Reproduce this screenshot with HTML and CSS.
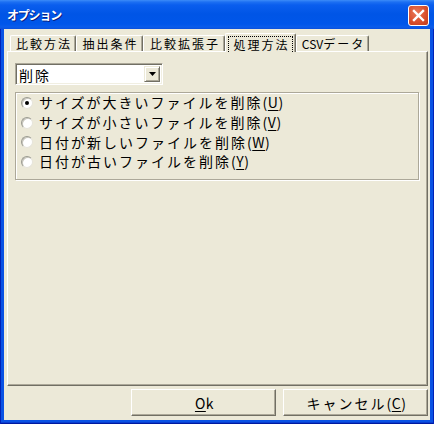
FILE: index.html
```html
<!DOCTYPE html>
<html lang="ja">
<head>
<meta charset="utf-8">
<title>オプション</title>
<link rel="stylesheet" href="styles.css">
</head>
<body>
<div class="window">
  <div class="titlebar">
    <span class="title">オプション</span>
    <span class="close">
      <svg width="21" height="21" viewBox="0 0 21 21">
        <path d="M6 6 L15 15 M15 6 L6 15" stroke="#fff" stroke-width="2.4" stroke-linecap="square"/>
      </svg>
    </span>
  </div>
  <div class="client">
    <div class="tabs">
      <div class="tab t1">比較方法</div>
      <div class="tab t2">抽出条件</div>
      <div class="tab t3">比較拡張子</div>
      <div class="tab t4 active"><span class="focus">処理方法</span></div>
      <div class="tab t5"><span class="latin">CSV</span>データ</div>
    </div>
    <div class="panel">
      <div class="combo">
        <span class="combo-text">削除</span>
        <span class="combo-btn">
          <svg width="7" height="4" viewBox="0 0 7 4"><path d="M0 0 H7 L3.5 4 Z" fill="#000"/></svg>
        </span>
      </div>
      <div class="group">
        <div class="row"><span class="radio checked"></span><span class="label">サイズが大きいファイルを削除<span class="hw">(<u>U</u>)</span></span></div>
        <div class="row"><span class="radio"></span><span class="label">サイズが小さいファイルを削除<span class="hw">(<u>V</u>)</span></span></div>
        <div class="row"><span class="radio"></span><span class="label">日付が新しいファイルを削除<span class="hw">(<u>W</u>)</span></span></div>
        <div class="row"><span class="radio"></span><span class="label">日付が古いファイルを削除<span class="hw">(<u>Y</u>)</span></span></div>
      </div>
    </div>
    <div class="buttons">
      <div class="btn"><span class="hw"><u>O</u>k</span></div>
      <div class="btn">キャンセル<span class="hw">(<u>C</u>)</span></div>
    </div>
  </div>
</div>
</body>
</html>
```
FILE: styles.css
```css
html, body {
  margin: 0;
  padding: 0;
  background: #0a4fe0;
}
body {
  width: 434px;
  height: 424px;
  overflow: hidden;
  font-family: "Noto Sans CJK JP", "Noto Sans", sans-serif;
  color: #000;
}
.window {
  width: 434px;
  height: 424px;
  display: flex;
  flex-direction: column;
  background: #0a52e4;
  box-shadow: inset 1px 0 #0022b8, inset -1px 0 #0022b8, inset 0 -1px #0019a0, inset 0 -2px #0a3ed0;
  box-sizing: border-box;
}
.titlebar {
  height: 29px;
  flex: none;
  display: flex;
  align-items: center;
  justify-content: space-between;
  padding: 0 5px 0 7px;
  background: linear-gradient(to bottom, #3c8cf8 0px, #1d70f2 2px, #0a5eee 5px, #0055e6 14px, #0056ea 24px, #0a5ceb 27px, #0a4fdc 29px);
}
.title {
  color: #fff;
  font-size: 12px;
  font-weight: bold;
  letter-spacing: -1.2px;
  text-shadow: 1px 1px #0a1e80;
  line-height: 14px;
  margin-top: 1px;
}
.close {
  width: 21px;
  height: 21px;
  box-sizing: border-box;
  border: 1px solid #fff;
  border-radius: 3px;
  background: radial-gradient(circle at 40% 35%, #e97a5a 0%, #d9502e 55%, #c03a1a 100%);
  display: flex;
  align-items: center;
  justify-content: center;
  margin-top: 1px;
}
.close svg {
  margin: -1px;
}
.client {
  flex: 1;
  margin: 0 4px 4px 4px;
  background: #ece9d8;
  display: flex;
  flex-direction: column;
}
.tabs {
  display: flex;
  align-items: flex-end;
  height: 18px;
  margin: 4px 0 0 6px;
  flex: none;
  font-size: 12px;
  letter-spacing: 2px;
}
.tab {
  height: 16px;
  box-sizing: border-box;
  border-top: 1px solid #fff;
  border-left: 1px solid #fff;
  border-right: 1px solid #716f64;
  box-shadow: inset -1px 0 #aca899;
  border-radius: 2px 2px 0 0;
  display: flex;
  align-items: center;
  justify-content: center;
  line-height: 14px;
  padding-left: 2px;
  background: #ece9d8;
}
.t1 { width: 66px; }
.t2 { width: 67px; }
.t3 { width: 82px; }
.t4 { width: 71px; }
.t5 { width: 73px; }
.latin {
  letter-spacing: 0;
}
.tab.active {
  height: 19px;
  margin-bottom: -1px;
  position: relative;
  z-index: 1;
  padding: 2px 2px 0 2px;
  align-items: stretch;
}
.focus {
  flex: 1;
  display: flex;
  align-items: center;
  justify-content: center;
  border: 1px dotted #000;
  border-bottom: none;
  padding-left: 2px;
}
.panel {
  flex: 1;
  margin: 0 2px 0 3px;
  border-top: 1px solid #fff;
  border-left: 1px solid #fff;
  border-right: 1px solid #716f64;
  border-bottom: 1px solid #716f64;
  box-shadow: inset -1px -1px #aca899;
  padding: 11px 0 0 7px;
  font-size: 14px;
  letter-spacing: 2px;
}
.combo {
  width: 148px;
  height: 22px;
  box-sizing: border-box;
  border-top: 1px solid #aca899;
  border-left: 1px solid #aca899;
  border-right: 1px solid #fff;
  border-bottom: 1px solid #fff;
  box-shadow: inset 1px 1px #716f64, inset -1px -1px #f1efe2;
  background: #fff;
  display: flex;
  align-items: stretch;
  padding: 2px;
}
.combo-text {
  flex: 1;
  line-height: 18px;
  padding-left: 1px;
}
.combo-btn {
  width: 16px;
  box-sizing: border-box;
  background: #ece9d8;
  border-top: 1px solid #ece9d8;
  border-left: 1px solid #ece9d8;
  border-right: 1px solid #716f64;
  border-bottom: 1px solid #716f64;
  box-shadow: inset 1px 1px #fff, inset -1px -1px #aca899;
  display: flex;
  align-items: center;
  justify-content: center;
}
.group {
  margin-top: 7px;
  width: 404px;
  height: 88px;
  box-sizing: border-box;
  border: 1px solid #aca899;
  box-shadow: inset 1px 1px #fff, 1px 1px #fff;
}
.row {
  height: 19.7px;
  display: flex;
  align-items: center;
  padding-left: 5px;
  line-height: 19px;
}
.radio {
  width: 12px;
  height: 12px;
  flex: none;
  box-sizing: border-box;
  border-radius: 50%;
  border: 1px solid;
  border-color: #9a9a90 #e6e4da #e6e4da #9a9a90;
  background: #fff;
  box-shadow: inset 1px 1px #c8c6bc;
  margin-right: 6px;
  position: relative;
}
.radio.checked::after {
  content: "";
  position: absolute;
  left: 3px;
  top: 3px;
  width: 4px;
  height: 4px;
  border-radius: 50%;
  background: #000;
}
.hw {
  letter-spacing: 0.5px;
}
u {
  text-decoration: underline;
  text-underline-offset: 2px;
}
.buttons {
  flex: none;
  height: 27px;
  margin: 3px 2px 4px 0;
  display: flex;
  justify-content: flex-end;
  gap: 7px;
  font-size: 14px;
  letter-spacing: 2px;
}
.btn {
  width: 145px;
  height: 27px;
  box-sizing: border-box;
  border-top: 1px solid #fff;
  border-left: 1px solid #fff;
  border-right: 1px solid #716f64;
  border-bottom: 1px solid #716f64;
  box-shadow: inset -1px -1px #aca899;
  display: flex;
  align-items: center;
  justify-content: center;
  line-height: 18px;
  padding-left: 2px;
}
```
